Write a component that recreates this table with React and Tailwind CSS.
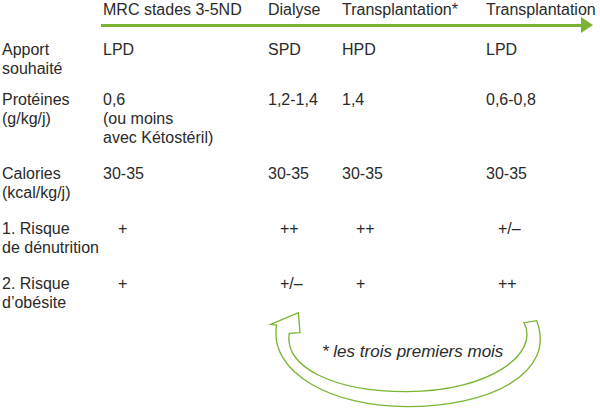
import React from 'react';

const rows = [
  { label: ['Apport', 'souhaité'], cells: [['LPD'], ['SPD'], ['HPD'], ['LPD']], mt: 'mt-[9px]' },
  { label: ['Protéines', '(g/kg/j)'], cells: [['0,6', '(ou moins', 'avec Kétostéril)'], ['1,2-1,4'], ['1,4'], ['0,6-0,8']], mt: 'mt-[12px]' },
  { label: ['Calories', '(kcal/kg/j)'], cells: [['30-35'], ['30-35'], ['30-35'], ['30-35']], mt: 'mt-[17px]' },
  { label: ['1. Risque', 'de dénutrition'], cells: [['+'], ['++'], ['++'], ['+/–']], mt: 'mt-[17px]', sym: true },
  { label: ['2. Risque', 'd’obésite'], cells: [['+'], ['+/–'], ['+'], ['++']], mt: 'mt-[17px]', sym: true },
];

const symPad = ['pl-[15px]', 'pl-[12px]', 'pl-[14px]', 'pl-[12px]'];
const cols = 'grid grid-cols-[103px_165px_74px_144px_1fr]';

function Row({ row }) {
  return (
    <div className={`${cols} ${row.mt}`}>
      <div className="pl-[2px] whitespace-nowrap">
        {row.label.map((l) => <div key={l}>{l}</div>)}
      </div>
      {row.cells.map((c, i) => (
        <div key={i} className={row.sym ? symPad[i] : ''}>
          {c.map((t) => <div key={t} className="whitespace-nowrap">{t}</div>)}
        </div>
      ))}
    </div>
  );
}

export default function App() {
  return (
    <div className="w-[600px] h-[408px] overflow-hidden bg-white text-[#2a2a2a] text-[16px] leading-[19px] font-['Liberation_Sans',Arial,sans-serif]">
      {/* Header */}
      <div className={cols}>
        <div />
        <div className="whitespace-nowrap">MRC stades 3-5ND</div>
        <div>Dialyse</div>
        <div className="whitespace-nowrap">Transplantation*</div>
        <div className="whitespace-nowrap">Transplantation</div>
      </div>
      <div className="flex items-center ml-[101px] h-[12px]">
        <div className="flex-1 h-[3px] bg-[#7ab432]" />
        <svg width="12" height="16" viewBox="0 0 12 16" className="mr-[7px] shrink-0">
          <polygon points="0,0 12,8 0,16" fill="#7ab432" />
        </svg>
      </div>

      {rows.map((r, i) => <Row key={i} row={r} />)}

      {/* Curved arrow + note */}
      <div className="relative ml-[250px] mt-[-22px] w-[350px] h-[118px]">
        <svg className="absolute inset-0" width="350" height="118" viewBox="0 0 1050 354">
          <path
            d="M 822 98 C 870 190, 720 305, 470 305 C 250 305, 100 230, 118 130 L 150 128 L 145 68 L 62 103 L 80 105 C 55 250, 250 350, 470 350 C 720 350, 920 250, 860 92 Z"
            fill="none"
            stroke="#7ab432"
            strokeWidth="4"
            strokeLinejoin="miter"
          />
        </svg>
        <div className="absolute left-[72px] top-[52px] italic text-[17px] whitespace-nowrap">* les trois premiers mois</div>
      </div>
    </div>
  );
}
